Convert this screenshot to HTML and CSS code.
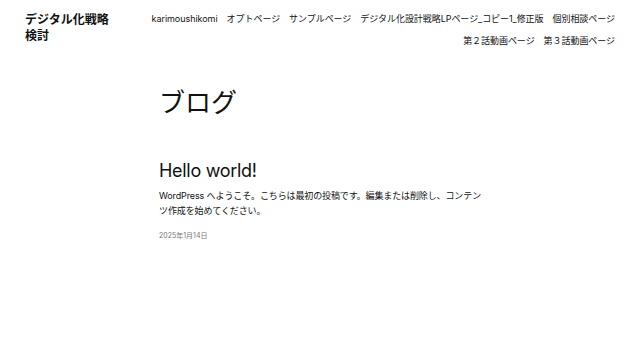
FILE: index.html
```html
<!DOCTYPE html>
<html lang="ja">
<head>
  <meta charset="UTF-8">
  <meta name="viewport" content="width=device-width, initial-scale=1.0">
  <title>ブログ</title>
  <link rel="stylesheet" href="styles.css">
</head>
<body>
  <header class="site-header">
    <div class="site-title">デジタル化戦略<br>検討</div>
    <nav class="site-nav">
      <a href="#">karimoushikomi</a>
      <a href="#">オプトページ</a>
      <a href="#">サンプルページ</a>
      <a href="#">デジタル化設計戦略LPページ_コピー1_修正版</a>
      <a href="#">個別相談ページ</a>
      <a href="#">第２話動画ページ</a>
      <a href="#">第３話動画ページ</a>
    </nav>
  </header>

  <main class="content">
    <h1 class="page-title">ブログ</h1>

    <article class="post">
      <h2 class="post-title">Hello world!</h2>
      <p class="post-excerpt">WordPress へようこそ。こちらは最初の投稿です。編集または削除し、コンテンツ作成を始めてください。</p>
      <div class="post-date">2025年1月14日</div>
    </article>
  </main>
</body>
</html>
```

FILE: styles.css
```css
body {
  margin: 0;
  background: #ffffff;
  color: #111111;
  font-family: Inter, "Noto Sans CJK JP", sans-serif;
}

.site-header {
  display: flex;
  justify-content: space-between;
  align-items: flex-start;
  gap: 20px;
  padding: 12px 25px 0 25px;
}

.site-title {
  font-size: 12px;
  font-weight: 600;
  line-height: 16px;
  white-space: nowrap;
}

.site-nav {
  flex: 1;
  display: flex;
  flex-wrap: wrap;
  justify-content: flex-end;
  column-gap: 9px;
  row-gap: 9px;
  font-size: 9px;
  line-height: 13px;
  letter-spacing: -0.05px;
}

.site-nav a {
  color: #111111;
  text-decoration: none;
  white-space: nowrap;
}

.content {
  max-width: 322px;
  margin: 0 auto;
  padding-top: 40px;
}

.page-title {
  font-size: 26px;
  font-weight: 400;
  line-height: 32px;
  margin: 0 0 41px 0;
}

.post-title {
  font-size: 18px;
  font-weight: 400;
  line-height: 22px;
  letter-spacing: -0.3px;
  margin: 0 0 6px 0;
}

.post-excerpt {
  font-size: 9px;
  line-height: 15px;
  letter-spacing: -0.12px;
  margin: 0 0 12px 0;
}

.post-date {
  font-size: 7px;
  color: #777777;
}
```
